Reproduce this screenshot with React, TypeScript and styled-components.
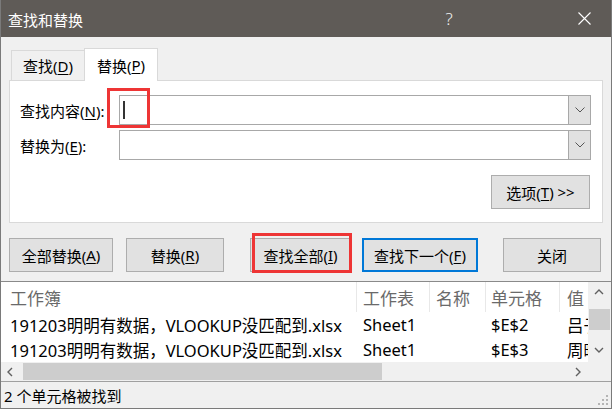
import styled, { createGlobalStyle } from 'styled-components';

const GlobalStyle = createGlobalStyle`
  html, body { margin: 0; padding: 0; background: #f0f0f0; }
  body { font-family: "Noto Sans", "Noto Sans CJK SC", sans-serif; }
  * { box-sizing: border-box; }
`;

const Window = styled.div`
  width: 612px;
  height: 409px;
  background: #f0f0f0;
  border: 1px solid #7a7a7a;
  border-top: none;
  display: flex;
  flex-direction: column;
  overflow: hidden;
`;

const TitleBar = styled.div`
  height: 37px;
  flex: none;
  margin: 0 -1px;
  background: #5f5b57;
  color: #fff;
  display: flex;
  align-items: center;
  padding-left: 8px;
  font-size: 15px;
`;

const TitleText = styled.div`
  flex: 1;
  padding-top: 2px;
`;

const TitleButton = styled.div<{ $mr?: number }>`
  width: 46px;
  height: 37px;
  display: flex;
  align-items: center;
  justify-content: center;
  margin-right: ${({ $mr }) => $mr ?? 0}px;
  font-size: 17px;
  font-weight: 300;
  color: #f2f2f2;
`;

const Content = styled.div`
  padding: 11px 8px 0 8px;
  flex: none;
`;

const TabStrip = styled.div`
  display: flex;
  align-items: flex-end;
  height: 32px;
  padding-left: 2px;
`;

const Tab = styled.div<{ $active?: boolean }>`
  position: relative;
  z-index: ${({ $active }) => ($active ? 1 : 0)};
  height: ${({ $active }) => ($active ? 33 : 30)}px;
  margin-bottom: ${({ $active }) => ($active ? -1 : 0)}px;
  padding: 0 ${({ $active }) => ($active ? 12 : 11)}px;
  display: flex;
  align-items: center;
  font-size: 15px;
  color: #000;
  background: ${({ $active }) => ($active ? '#fff' : '#f0f0f0')};
  border: 1px solid #d9d9d9;
  border-bottom: none;
  ${({ $active }) => (!$active ? 'border-right: none;' : '')}
`;

const Key = styled.span`
  text-decoration: underline;
  text-underline-offset: 2px;
`;

const Panel = styled.div`
  height: 143px;
  background: #fff;
  border: 1px solid #d9d9d9;
  padding: 14px 11px 0 10px;
`;

const FieldRow = styled.div<{ $mb?: number }>`
  display: grid;
  grid-template-columns: 99px 1fr;
  align-items: center;
  height: 30px;
  margin-bottom: ${({ $mb }) => $mb ?? 0}px;
`;

const Label = styled.div`
  font-size: 15px;
  color: #000;
`;

const Combo = styled.div`
  position: relative;
  height: 30px;
  display: flex;
  background: #fff;
  border: 1px solid #a8a8a8;
`;

const ComboField = styled.div`
  flex: 1;
  position: relative;
`;

const Caret = styled.span`
  position: absolute;
  left: 3px;
  top: 5px;
  width: 2px;
  height: 18px;
  background: #333;
`;

const DropButton = styled.div`
  width: 22px;
  background: #e1e1e1;
  border-left: 1px solid #a8a8a8;
  display: flex;
  align-items: center;
  justify-content: center;
`;

const OptionsRow = styled.div`
  display: flex;
  justify-content: flex-end;
  margin-top: 15px;
  padding-right: 1px;
`;

const Button = styled.div<{ $w: number; $ml?: number; $primary?: boolean }>`
  position: relative;
  width: ${({ $w }) => $w}px;
  height: 34px;
  margin-left: ${({ $ml }) => $ml ?? 0}px;
  display: flex;
  align-items: center;
  justify-content: center;
  font-size: 15px;
  color: #000;
  background: #e1e1e1;
  border: ${({ $primary }) => ($primary ? '2px solid #0078d7' : '1px solid #adadad')};
`;

const Highlight = styled.div<{ $l: number; $t: number; $w: number; $h: number }>`
  position: absolute;
  left: ${({ $l }) => $l}px;
  top: ${({ $t }) => $t}px;
  width: ${({ $w }) => $w}px;
  height: ${({ $h }) => $h}px;
  border: 3px solid #ee3535;
  pointer-events: none;
  z-index: 2;
`;

const ButtonRow = styled.div`
  display: flex;
  margin-top: 15px;
  height: 34px;
`;

const Results = styled.div`
  margin-top: 9px;
  flex: none;
  border-top: 1px solid #8a8a8a;
  background: #fff;
  display: grid;
  grid-template-columns: 1fr 23px;
  grid-template-rows: 80px 19px;
`;

const Table = styled.div`
  display: grid;
  grid-template-columns: 356px 73px 56px 74px 28px;
  grid-template-rows: 30px 25px 25px;
  overflow: hidden;
`;

const HeadCell = styled.div<{ $pl: number; $last?: boolean }>`
  display: flex;
  align-items: center;
  padding-left: ${({ $pl }) => $pl}px;
  font-size: 17px;
  color: #6a6a6a;
  white-space: nowrap;
  overflow: hidden;
  border-right: ${({ $last }) => ($last ? 'none' : '1px solid #e8e8e8')};
`;

const Cell = styled.div<{ $pl: number }>`
  display: flex;
  align-items: center;
  padding-left: ${({ $pl }) => $pl}px;
  font-size: 16.5px;
  color: #000;
  white-space: nowrap;
  overflow: hidden;
`;

const VScroll = styled.div`
  background: #f0f0f0;
  display: flex;
  flex-direction: column;
`;

const ScrollArrow = styled.div<{ $size: number }>`
  flex: none;
  width: ${({ $size }) => $size}px;
  height: ${({ $size }) => $size}px;
  display: flex;
  align-items: center;
  justify-content: center;
`;

const VThumb = styled.div`
  margin: 5px 1px 0 1px;
  height: 21px;
  background: #cdcdcd;
`;

const HScroll = styled.div`
  background: #f0f0f0;
  display: flex;
  align-items: stretch;
`;

const HThumb = styled.div`
  width: 359px;
  margin: 1px 0 1px 2px;
  background: #cdcdcd;
`;

const Spacer = styled.div`
  flex: 1;
`;

const Corner = styled.div`
  background: #f0f0f0;
`;

const StatusBar = styled.div`
  flex: 1;
  border-top: 1px solid #a0a0a0;
  display: flex;
  align-items: center;
  padding-left: 3px;
  font-size: 15px;
  color: #000;
`;

const Grip = styled.div`
  align-self: flex-end;
  margin: 0 2px 2px auto;
  display: flex;
`;

const Chevron = ({ dir, color = '#606060' }: { dir: 'up' | 'down' | 'left' | 'right'; color?: string }) => {
  const pts = {
    up: '1,6 5,2 9,6',
    down: '1,2 5,6 9,2',
    left: '6,1 2,5 6,9',
    right: '3,1 7,5 3,9',
  }[dir];
  return (
    <svg width="10" height="10" viewBox="0 0 10 10">
      <polyline points={pts} fill="none" stroke={color} strokeWidth="1.4" />
    </svg>
  );
};

const ComboChevron = () => (
  <svg width="10" height="6" viewBox="0 0 10 6">
    <polyline points="0.5,0.5 5,5 9.5,0.5" fill="none" stroke="#555" strokeWidth="1" />
  </svg>
);

const GripIcon = () => (
  <svg width="12" height="12" viewBox="0 0 12 12" fill="#b4b4b4">
    <rect x="9" y="1" width="2" height="2" />
    <rect x="5" y="5" width="2" height="2" />
    <rect x="9" y="5" width="2" height="2" />
    <rect x="1" y="9" width="2" height="2" />
    <rect x="5" y="9" width="2" height="2" />
    <rect x="9" y="9" width="2" height="2" />
  </svg>
);

const rows = [
  { book: '191203明明有数据，VLOOKUP没匹配到.xlsx', sheet: 'Sheet1', name: '', cell: '$E$2', value: '吕子' },
  { book: '191203明明有数据，VLOOKUP没匹配到.xlsx', sheet: 'Sheet1', name: '', cell: '$E$3', value: '周晓' },
];

const Row = ({ book, sheet, name, cell, value }: { book: string; sheet: string; name: string; cell: string; value: string }) => (
  <>
    <Cell $pl={9}>{book}</Cell>
    <Cell $pl={6}>{sheet}</Cell>
    <Cell $pl={6}>{name}</Cell>
    <Cell $pl={5}>{cell}</Cell>
    <Cell $pl={7}>{value}</Cell>
  </>
);

export default function App() {
  return (
    <>
      <GlobalStyle />
      <Window>
        <TitleBar>
          <TitleText>查找和替换</TitleText>
          <TitleButton $mr={89}>?</TitleButton>
          <TitleButton $mr={5}>
            <svg width="13" height="13" viewBox="0 0 13 13">
              <path d="M0.5 0.5 L12.5 12.5 M12.5 0.5 L0.5 12.5" stroke="#fff" strokeWidth="1.1" />
            </svg>
          </TitleButton>
        </TitleBar>

        <Content>
          <TabStrip>
            <Tab>
              查找(<Key>D</Key>)
            </Tab>
            <Tab $active>
              替换(<Key>P</Key>)
            </Tab>
          </TabStrip>
          <Panel>
            <FieldRow $mb={5}>
              <Label>
                查找内容(<Key>N</Key>):
              </Label>
              <Combo>
                <Highlight $l={-13} $t={-8} $w={43} $h={40} />
                <ComboField>
                  <Caret />
                </ComboField>
                <DropButton>
                  <ComboChevron />
                </DropButton>
              </Combo>
            </FieldRow>
            <FieldRow>
              <Label>
                替换为(<Key>E</Key>):
              </Label>
              <Combo>
                <ComboField />
                <DropButton>
                  <ComboChevron />
                </DropButton>
              </Combo>
            </FieldRow>
            <OptionsRow>
              <Button $w={99}>
                选项(<Key>T</Key>) &gt;&gt;
              </Button>
            </OptionsRow>
          </Panel>

          <ButtonRow>
            <Button $w={104}>
              全部替换(<Key>A</Key>)
            </Button>
            <Button $w={98} $ml={13}>
              替换(<Key>R</Key>)
            </Button>
            <Button $w={101} $ml={26}>
              <Highlight $l={1} $t={-6} $w={100} $h={40} />
              查找全部(<Key>I</Key>)
            </Button>
            <Button $w={116} $ml={11} $primary>
              查找下一个(<Key>F</Key>)
            </Button>
            <Button $w={98} $ml={25}>
              关闭
            </Button>
          </ButtonRow>
        </Content>

        <Results>
          <Table>
            <HeadCell $pl={9}>工作簿</HeadCell>
            <HeadCell $pl={6}>工作表</HeadCell>
            <HeadCell $pl={6}>名称</HeadCell>
            <HeadCell $pl={5}>单元格</HeadCell>
            <HeadCell $pl={7} $last>
              值
            </HeadCell>
            {rows.map((r, i) => (
              <Row key={i} {...r} />
            ))}
          </Table>
          <VScroll>
            <ScrollArrow $size={22}>
              <Chevron dir="up" />
            </ScrollArrow>
            <VThumb />
            <Spacer />
            <ScrollArrow $size={22}>
              <Chevron dir="down" />
            </ScrollArrow>
          </VScroll>
          <HScroll>
            <ScrollArrow $size={20}>
              <Chevron dir="left" />
            </ScrollArrow>
            <HThumb />
            <Spacer />
            <ScrollArrow $size={20}>
              <Chevron dir="right" />
            </ScrollArrow>
          </HScroll>
          <Corner />
        </Results>

        <StatusBar>
          2 个单元格被找到
          <Grip>
            <GripIcon />
          </Grip>
        </StatusBar>
      </Window>
    </>
  );
}
